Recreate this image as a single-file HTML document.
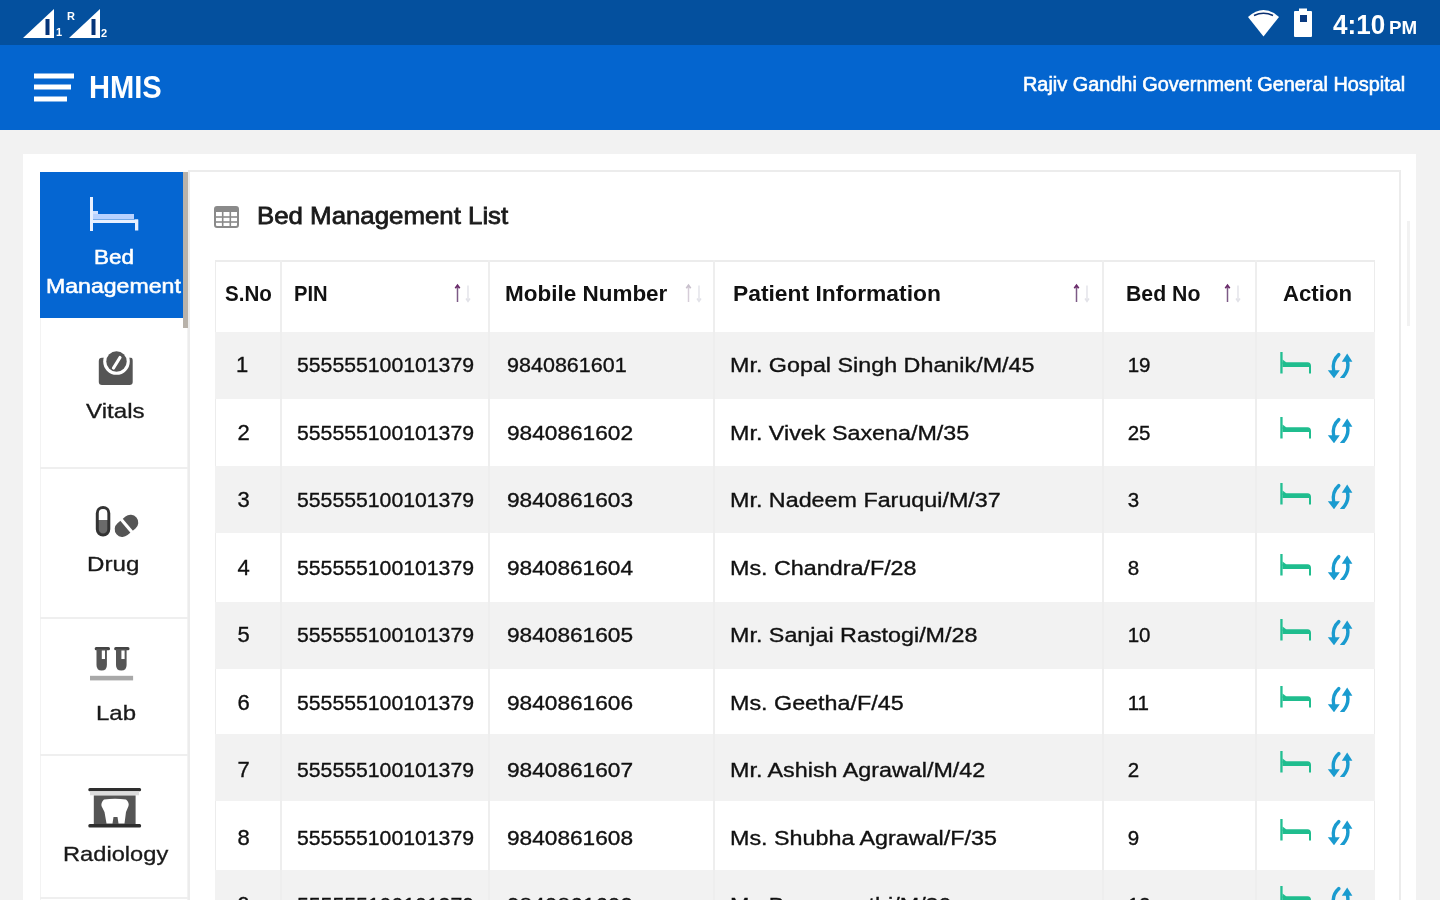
<!DOCTYPE html>
<html><head><meta charset="utf-8"><title>HMIS</title><style>
*{margin:0;padding:0;box-sizing:border-box}
html,body{width:1440px;height:900px;overflow:hidden;background:#f2f2f2;font-family:"Liberation Sans",sans-serif;color:#111}
.a{position:absolute}
.t{position:absolute;white-space:nowrap;line-height:1;transform-origin:0 0}
</style></head>
<body><div id="root" style="position:absolute;left:0;top:0;width:1440px;height:900px;overflow:hidden;filter:blur(0.45px)">
<div class="a" style="left:0;top:0;width:1440px;height:45px;background:#04509e"></div>
<div class="a" style="left:0;top:45px;width:1440px;height:84.5px;background:#0465cf"></div>
<svg class="a" style="left:0;top:0" width="1440" height="45" viewBox="0 0 1440 45">
<polygon points="23,38 54,9 54,38" fill="#fff"/>
<rect x="45.5" y="19" width="4" height="16" fill="#06357a"/>
<text x="56" y="36" font-family="Liberation Sans" font-weight="bold" font-size="11" fill="#fff">1</text>
<text x="67" y="19.5" font-family="Liberation Sans" font-weight="bold" font-size="11" fill="#fff">R</text>
<polygon points="69,38 100,9 100,38" fill="#fff"/>
<rect x="91.5" y="19" width="4" height="16" fill="#06357a"/>
<text x="101" y="37" font-family="Liberation Sans" font-weight="bold" font-size="11" fill="#fff">2</text>
<path d="M1248,17 Q1263.5,3 1279,17 L1263.5,36.5 Z" fill="#fff"/>
<path d="M1254,15.5 Q1263.5,11 1273,15.5" stroke="#0a2f70" stroke-width="1.6" fill="none"/>
<rect x="1299" y="8.5" width="8" height="3" fill="#fff"/>
<rect x="1294" y="11" width="18" height="26" rx="1" fill="#fff"/>
<rect x="1300" y="15" width="7" height="7" fill="#0a3a80"/>
</svg>
<div class="t" style="left:1332.64px;top:10.00px;font-size:28.5px;font-weight:bold;color:#fff;transform:scaleX(0.9140);">4:10</div>
<div class="t" style="left:1388.76px;top:18.00px;font-size:19.0px;font-weight:bold;color:#fff;transform:scaleX(0.9885);">PM</div>
<svg class="a" style="left:0;top:45px" width="200" height="84" viewBox="0 45 200 84">
<rect x="34" y="73.5" width="40" height="5" fill="#fff"/>
<rect x="34" y="84.5" width="37" height="5" fill="#fff"/>
<rect x="34" y="96.5" width="33" height="5" fill="#fff"/>
</svg>
<div class="t" style="left:88.72px;top:72.05px;font-size:31.0px;font-weight:bold;color:#fff;transform:scaleX(0.9387);">HMIS</div>
<div class="t" style="left:1022.78px;top:75.40px;font-size:19.6px;font-weight:normal;color:#fff;transform:scaleX(1.0144);-webkit-text-stroke:0.6px #fff;">Rajiv Gandhi Government General Hospital</div>
<div class="a" style="left:23px;top:154px;width:1393px;height:760px;background:#fff"></div>
<div class="a" style="left:188px;top:170px;width:1213px;height:760px;border:2px solid #ececec;background:#fff"></div>
<div class="a" style="left:40px;top:172px;width:148px;height:728px;background:#fff;border-left:1px solid #f3f3f3;border-right:1px solid #f3f3f3"></div>
<div class="a" style="left:40px;top:172px;width:143px;height:146px;background:#0566d2"></div>
<div class="a" style="left:183px;top:172px;width:5px;height:156px;background:#b8b2aa"></div>
<div class="a" style="left:40px;top:467px;width:148px;height:2px;background:#efefef"></div>
<div class="a" style="left:40px;top:617px;width:148px;height:2px;background:#efefef"></div>
<div class="a" style="left:40px;top:754px;width:148px;height:2px;background:#efefef"></div>
<div class="a" style="left:40px;top:897px;width:148px;height:2px;background:#efefef"></div>
<svg class="a" style="left:0;top:0" width="200" height="900" viewBox="0 0 200 900">
<rect x="90" y="197" width="3" height="34" fill="#e8f0ff"/>
<rect x="93" y="211" width="5" height="5" fill="#cfe0ff"/>
<rect x="93" y="214" width="41" height="5" fill="#b8d2ff"/>
<rect x="93" y="219.5" width="45" height="3.5" fill="#e8f0ff"/>
<rect x="135" y="219.5" width="3.3" height="11" fill="#e8f0ff"/>
</svg>
<div class="t" style="left:94.05px;top:246.70px;font-size:20.2px;font-weight:normal;color:#fff;transform:scaleX(1.1115);-webkit-text-stroke:0.55px #fff;">Bed</div>
<div class="t" style="left:46.10px;top:276.30px;font-size:20.2px;font-weight:normal;color:#fff;transform:scaleX(1.1440);-webkit-text-stroke:0.55px #fff;">Management</div>
<div class="t" style="left:86.00px;top:401.40px;font-size:20.2px;font-weight:normal;color:#1a1a1a;transform:scaleX(1.1958);-webkit-text-stroke:0.3px #1a1a1a;">Vitals</div>
<div class="t" style="left:87.21px;top:553.60px;font-size:20.2px;font-weight:normal;color:#1a1a1a;transform:scaleX(1.1951);-webkit-text-stroke:0.3px #1a1a1a;">Drug</div>
<div class="t" style="left:96.42px;top:703.20px;font-size:20.2px;font-weight:normal;color:#1a1a1a;transform:scaleX(1.1871);-webkit-text-stroke:0.3px #1a1a1a;">Lab</div>
<div class="t" style="left:62.75px;top:844.10px;font-size:20.2px;font-weight:normal;color:#1a1a1a;transform:scaleX(1.1727);-webkit-text-stroke:0.3px #1a1a1a;">Radiology</div>
<svg class="a" style="left:214px;top:206px" width="26" height="22" viewBox="0 0 26 22">
<rect x="1" y="1" width="23" height="20" rx="2" fill="none" stroke="#8a8a8a" stroke-width="2"/>
<rect x="1" y="1" width="23" height="5" fill="#8a8a8a"/>
<line x1="1" y1="11" x2="24" y2="11" stroke="#8a8a8a" stroke-width="1.6"/>
<line x1="1" y1="16" x2="24" y2="16" stroke="#8a8a8a" stroke-width="1.6"/>
<line x1="8.7" y1="5" x2="8.7" y2="21" stroke="#8a8a8a" stroke-width="1.6"/>
<line x1="16.3" y1="5" x2="16.3" y2="21" stroke="#8a8a8a" stroke-width="1.6"/>
</svg>
<div class="t" style="left:257.39px;top:203.65px;font-size:24.5px;font-weight:normal;color:#1a1a1a;transform:scaleX(1.0540);-webkit-text-stroke:0.8px #1a1a1a;">Bed Management List</div>
<div class="a" style="left:215px;top:260px;width:1159.5px;height:640px;background:#fff;border-left:1px solid #ececec;border-right:1px solid #ececec;border-top:2px solid #ececec"></div>
<div class="a" style="left:215px;top:332.3px;width:1159.5px;height:67.20px;background:#f2f2f2"></div>
<div class="a" style="left:215px;top:465.8px;width:1159.5px;height:67.00px;background:#f2f2f2"></div>
<div class="a" style="left:215px;top:602.1px;width:1159.5px;height:67.40px;background:#f2f2f2"></div>
<div class="a" style="left:215px;top:734.4px;width:1159.5px;height:67.10px;background:#f2f2f2"></div>
<div class="a" style="left:215px;top:870px;width:1159.5px;height:67.00px;background:#f2f2f2"></div>
<div class="a" style="left:280px;top:260px;width:2px;height:640px;background:#eeeeee"></div>
<div class="a" style="left:487.5px;top:260px;width:2px;height:640px;background:#eeeeee"></div>
<div class="a" style="left:712.5px;top:260px;width:2px;height:640px;background:#eeeeee"></div>
<div class="a" style="left:1101.5px;top:260px;width:2px;height:640px;background:#eeeeee"></div>
<div class="a" style="left:1254.5px;top:260px;width:2px;height:640px;background:#eeeeee"></div>
<div class="t" style="left:224.58px;top:283.75px;font-size:21.5px;font-weight:bold;color:#111;transform:scaleX(0.9566);">S.No</div>
<div class="t" style="left:294.29px;top:283.75px;font-size:21.5px;font-weight:bold;color:#111;transform:scaleX(0.9394);">PIN</div>
<div class="t" style="left:505.43px;top:283.75px;font-size:21.5px;font-weight:bold;color:#111;transform:scaleX(1.0456);">Mobile Number</div>
<div class="t" style="left:733.11px;top:283.75px;font-size:21.5px;font-weight:bold;color:#111;transform:scaleX(1.0611);">Patient Information</div>
<div class="t" style="left:1126.02px;top:283.75px;font-size:21.5px;font-weight:bold;color:#111;transform:scaleX(0.9890);">Bed No</div>
<div class="t" style="left:1283.18px;top:283.75px;font-size:21.5px;font-weight:bold;color:#111;transform:scaleX(1.0323);">Action</div>
<svg class="a" style="left:453px;top:283px" width="20" height="20" viewBox="0 0 20 20">
<path d="M4.5,19 V3" stroke="#7c5a86" stroke-width="1.5" fill="none"/>
<path d="M2.3,5.2 L4.5,2.2 L6.7,5.2" stroke="#6a2a6a" stroke-width="1.7" fill="none"/>
<path d="M15,2.5 V18" stroke="#e2e2e8" stroke-width="1.4" fill="none"/>
<path d="M13,15.5 L15,18.5 L17,15.5" stroke="#e2e2e8" stroke-width="1.4" fill="none"/>
</svg>
<svg class="a" style="left:684px;top:283px" width="20" height="20" viewBox="0 0 20 20">
<path d="M4.5,19 V3" stroke="#d6cdd8" stroke-width="1.5" fill="none"/>
<path d="M2.3,5.2 L4.5,2.2 L6.7,5.2" stroke="#c8c0cc" stroke-width="1.7" fill="none"/>
<path d="M15,2.5 V18" stroke="#e2e2e8" stroke-width="1.4" fill="none"/>
<path d="M13,15.5 L15,18.5 L17,15.5" stroke="#e2e2e8" stroke-width="1.4" fill="none"/>
</svg>
<svg class="a" style="left:1072px;top:283px" width="20" height="20" viewBox="0 0 20 20">
<path d="M4.5,19 V3" stroke="#7c5a86" stroke-width="1.5" fill="none"/>
<path d="M2.3,5.2 L4.5,2.2 L6.7,5.2" stroke="#6a2a6a" stroke-width="1.7" fill="none"/>
<path d="M15,2.5 V18" stroke="#e2e2e8" stroke-width="1.4" fill="none"/>
<path d="M13,15.5 L15,18.5 L17,15.5" stroke="#e2e2e8" stroke-width="1.4" fill="none"/>
</svg>
<svg class="a" style="left:1223px;top:283px" width="20" height="20" viewBox="0 0 20 20">
<path d="M4.5,19 V3" stroke="#7c5a86" stroke-width="1.5" fill="none"/>
<path d="M2.3,5.2 L4.5,2.2 L6.7,5.2" stroke="#6a2a6a" stroke-width="1.7" fill="none"/>
<path d="M15,2.5 V18" stroke="#e2e2e8" stroke-width="1.4" fill="none"/>
<path d="M13,15.5 L15,18.5 L17,15.5" stroke="#e2e2e8" stroke-width="1.4" fill="none"/>
</svg>
<div class="t" style="left:236.00px;top:353.70px;font-size:20.5px;font-weight:normal;color:#111;font-size:22px;-webkit-text-stroke:0.35px #111;">1</div>
<div class="t" style="left:296.77px;top:355.00px;font-size:20.5px;font-weight:normal;color:#111;transform:scaleX(1.0349);-webkit-text-stroke:0.35px #111;">555555100101379</div>
<div class="t" style="left:507.45px;top:355.00px;font-size:20.5px;font-weight:normal;color:#111;transform:scaleX(1.0500);-webkit-text-stroke:0.35px #111;">9840861601</div>
<div class="t" style="left:729.60px;top:355.00px;font-size:20.5px;font-weight:normal;color:#111;transform:scaleX(1.1370);-webkit-text-stroke:0.35px #111;">Mr. Gopal Singh Dhanik/M/45</div>
<div class="t" style="left:1127.70px;top:355.00px;font-size:20.5px;font-weight:normal;color:#111;-webkit-text-stroke:0.35px #111;">19</div>
<svg class="a" style="left:1278px;top:352.00px" width="80" height="26" viewBox="0 0 80 26">
<rect x="2.3" y="0" width="2.3" height="21.5" fill="#22bf92"/>
<path d="M4.5,7.5 L8.5,10.5 L4.5,12 Z" fill="#22bf92"/>
<path d="M4.5,10.3 L29.5,10.3 Q33,10.5 33,14 L33,21.5 L31,21.5 L31,15 L4.5,15 Z" fill="#1fbd8e"/>
<path d="M60.8,2.6 Q53.5,9 55.8,19.5" stroke="#1a9bcf" stroke-width="3.4" fill="none" stroke-linecap="round"/>
<path d="M49.8,18.3 L56,26.3 L61.8,18.3 Z" fill="#1a9bcf"/>
<path d="M69.2,8.5 Q72,18 63.8,26.3" stroke="#1a9bcf" stroke-width="3.4" fill="none" stroke-linecap="round"/>
<path d="M63.8,9.8 L69.2,1.4 L74.4,9.8 Z" fill="#1a9bcf"/>
</svg>
<div class="t" style="left:237.60px;top:421.60px;font-size:20.5px;font-weight:normal;color:#111;font-size:22px;-webkit-text-stroke:0.35px #111;">2</div>
<div class="t" style="left:296.77px;top:422.90px;font-size:20.5px;font-weight:normal;color:#111;transform:scaleX(1.0349);-webkit-text-stroke:0.35px #111;">555555100101379</div>
<div class="t" style="left:507.45px;top:422.90px;font-size:20.5px;font-weight:normal;color:#111;transform:scaleX(1.1050);-webkit-text-stroke:0.35px #111;">9840861602</div>
<div class="t" style="left:729.60px;top:422.90px;font-size:20.5px;font-weight:normal;color:#111;transform:scaleX(1.1370);-webkit-text-stroke:0.35px #111;">Mr. Vivek Saxena/M/35</div>
<div class="t" style="left:1127.70px;top:422.90px;font-size:20.5px;font-weight:normal;color:#111;-webkit-text-stroke:0.35px #111;">25</div>
<svg class="a" style="left:1278px;top:417.30px" width="80" height="26" viewBox="0 0 80 26">
<rect x="2.3" y="0" width="2.3" height="21.5" fill="#22bf92"/>
<path d="M4.5,7.5 L8.5,10.5 L4.5,12 Z" fill="#22bf92"/>
<path d="M4.5,10.3 L29.5,10.3 Q33,10.5 33,14 L33,21.5 L31,21.5 L31,15 L4.5,15 Z" fill="#1fbd8e"/>
<path d="M60.8,2.6 Q53.5,9 55.8,19.5" stroke="#1a9bcf" stroke-width="3.4" fill="none" stroke-linecap="round"/>
<path d="M49.8,18.3 L56,26.3 L61.8,18.3 Z" fill="#1a9bcf"/>
<path d="M69.2,8.5 Q72,18 63.8,26.3" stroke="#1a9bcf" stroke-width="3.4" fill="none" stroke-linecap="round"/>
<path d="M63.8,9.8 L69.2,1.4 L74.4,9.8 Z" fill="#1a9bcf"/>
</svg>
<div class="t" style="left:237.60px;top:488.70px;font-size:20.5px;font-weight:normal;color:#111;font-size:22px;-webkit-text-stroke:0.35px #111;">3</div>
<div class="t" style="left:296.77px;top:490.00px;font-size:20.5px;font-weight:normal;color:#111;transform:scaleX(1.0349);-webkit-text-stroke:0.35px #111;">555555100101379</div>
<div class="t" style="left:507.45px;top:490.00px;font-size:20.5px;font-weight:normal;color:#111;transform:scaleX(1.1050);-webkit-text-stroke:0.35px #111;">9840861603</div>
<div class="t" style="left:729.60px;top:490.00px;font-size:20.5px;font-weight:normal;color:#111;transform:scaleX(1.1370);-webkit-text-stroke:0.35px #111;">Mr. Nadeem Faruqui/M/37</div>
<div class="t" style="left:1127.70px;top:490.00px;font-size:20.5px;font-weight:normal;color:#111;-webkit-text-stroke:0.35px #111;">3</div>
<svg class="a" style="left:1278px;top:482.50px" width="80" height="26" viewBox="0 0 80 26">
<rect x="2.3" y="0" width="2.3" height="21.5" fill="#22bf92"/>
<path d="M4.5,7.5 L8.5,10.5 L4.5,12 Z" fill="#22bf92"/>
<path d="M4.5,10.3 L29.5,10.3 Q33,10.5 33,14 L33,21.5 L31,21.5 L31,15 L4.5,15 Z" fill="#1fbd8e"/>
<path d="M60.8,2.6 Q53.5,9 55.8,19.5" stroke="#1a9bcf" stroke-width="3.4" fill="none" stroke-linecap="round"/>
<path d="M49.8,18.3 L56,26.3 L61.8,18.3 Z" fill="#1a9bcf"/>
<path d="M69.2,8.5 Q72,18 63.8,26.3" stroke="#1a9bcf" stroke-width="3.4" fill="none" stroke-linecap="round"/>
<path d="M63.8,9.8 L69.2,1.4 L74.4,9.8 Z" fill="#1a9bcf"/>
</svg>
<div class="t" style="left:237.60px;top:556.60px;font-size:20.5px;font-weight:normal;color:#111;font-size:22px;-webkit-text-stroke:0.35px #111;">4</div>
<div class="t" style="left:296.77px;top:557.90px;font-size:20.5px;font-weight:normal;color:#111;transform:scaleX(1.0349);-webkit-text-stroke:0.35px #111;">555555100101379</div>
<div class="t" style="left:507.45px;top:557.90px;font-size:20.5px;font-weight:normal;color:#111;transform:scaleX(1.1050);-webkit-text-stroke:0.35px #111;">9840861604</div>
<div class="t" style="left:729.60px;top:557.90px;font-size:20.5px;font-weight:normal;color:#111;transform:scaleX(1.1370);-webkit-text-stroke:0.35px #111;">Ms. Chandra/F/28</div>
<div class="t" style="left:1127.70px;top:557.90px;font-size:20.5px;font-weight:normal;color:#111;-webkit-text-stroke:0.35px #111;">8</div>
<svg class="a" style="left:1278px;top:553.50px" width="80" height="26" viewBox="0 0 80 26">
<rect x="2.3" y="0" width="2.3" height="21.5" fill="#22bf92"/>
<path d="M4.5,7.5 L8.5,10.5 L4.5,12 Z" fill="#22bf92"/>
<path d="M4.5,10.3 L29.5,10.3 Q33,10.5 33,14 L33,21.5 L31,21.5 L31,15 L4.5,15 Z" fill="#1fbd8e"/>
<path d="M60.8,2.6 Q53.5,9 55.8,19.5" stroke="#1a9bcf" stroke-width="3.4" fill="none" stroke-linecap="round"/>
<path d="M49.8,18.3 L56,26.3 L61.8,18.3 Z" fill="#1a9bcf"/>
<path d="M69.2,8.5 Q72,18 63.8,26.3" stroke="#1a9bcf" stroke-width="3.4" fill="none" stroke-linecap="round"/>
<path d="M63.8,9.8 L69.2,1.4 L74.4,9.8 Z" fill="#1a9bcf"/>
</svg>
<div class="t" style="left:237.60px;top:623.70px;font-size:20.5px;font-weight:normal;color:#111;font-size:22px;-webkit-text-stroke:0.35px #111;">5</div>
<div class="t" style="left:296.77px;top:625.00px;font-size:20.5px;font-weight:normal;color:#111;transform:scaleX(1.0349);-webkit-text-stroke:0.35px #111;">555555100101379</div>
<div class="t" style="left:507.45px;top:625.00px;font-size:20.5px;font-weight:normal;color:#111;transform:scaleX(1.1050);-webkit-text-stroke:0.35px #111;">9840861605</div>
<div class="t" style="left:729.60px;top:625.00px;font-size:20.5px;font-weight:normal;color:#111;transform:scaleX(1.1370);-webkit-text-stroke:0.35px #111;">Mr. Sanjai Rastogi/M/28</div>
<div class="t" style="left:1127.70px;top:625.00px;font-size:20.5px;font-weight:normal;color:#111;-webkit-text-stroke:0.35px #111;">10</div>
<svg class="a" style="left:1278px;top:619.00px" width="80" height="26" viewBox="0 0 80 26">
<rect x="2.3" y="0" width="2.3" height="21.5" fill="#22bf92"/>
<path d="M4.5,7.5 L8.5,10.5 L4.5,12 Z" fill="#22bf92"/>
<path d="M4.5,10.3 L29.5,10.3 Q33,10.5 33,14 L33,21.5 L31,21.5 L31,15 L4.5,15 Z" fill="#1fbd8e"/>
<path d="M60.8,2.6 Q53.5,9 55.8,19.5" stroke="#1a9bcf" stroke-width="3.4" fill="none" stroke-linecap="round"/>
<path d="M49.8,18.3 L56,26.3 L61.8,18.3 Z" fill="#1a9bcf"/>
<path d="M69.2,8.5 Q72,18 63.8,26.3" stroke="#1a9bcf" stroke-width="3.4" fill="none" stroke-linecap="round"/>
<path d="M63.8,9.8 L69.2,1.4 L74.4,9.8 Z" fill="#1a9bcf"/>
</svg>
<div class="t" style="left:237.60px;top:691.60px;font-size:20.5px;font-weight:normal;color:#111;font-size:22px;-webkit-text-stroke:0.35px #111;">6</div>
<div class="t" style="left:296.77px;top:692.90px;font-size:20.5px;font-weight:normal;color:#111;transform:scaleX(1.0349);-webkit-text-stroke:0.35px #111;">555555100101379</div>
<div class="t" style="left:507.45px;top:692.90px;font-size:20.5px;font-weight:normal;color:#111;transform:scaleX(1.1050);-webkit-text-stroke:0.35px #111;">9840861606</div>
<div class="t" style="left:729.60px;top:692.90px;font-size:20.5px;font-weight:normal;color:#111;transform:scaleX(1.1370);-webkit-text-stroke:0.35px #111;">Ms. Geetha/F/45</div>
<div class="t" style="left:1127.70px;top:692.90px;font-size:20.5px;font-weight:normal;color:#111;-webkit-text-stroke:0.35px #111;">11</div>
<svg class="a" style="left:1278px;top:686.30px" width="80" height="26" viewBox="0 0 80 26">
<rect x="2.3" y="0" width="2.3" height="21.5" fill="#22bf92"/>
<path d="M4.5,7.5 L8.5,10.5 L4.5,12 Z" fill="#22bf92"/>
<path d="M4.5,10.3 L29.5,10.3 Q33,10.5 33,14 L33,21.5 L31,21.5 L31,15 L4.5,15 Z" fill="#1fbd8e"/>
<path d="M60.8,2.6 Q53.5,9 55.8,19.5" stroke="#1a9bcf" stroke-width="3.4" fill="none" stroke-linecap="round"/>
<path d="M49.8,18.3 L56,26.3 L61.8,18.3 Z" fill="#1a9bcf"/>
<path d="M69.2,8.5 Q72,18 63.8,26.3" stroke="#1a9bcf" stroke-width="3.4" fill="none" stroke-linecap="round"/>
<path d="M63.8,9.8 L69.2,1.4 L74.4,9.8 Z" fill="#1a9bcf"/>
</svg>
<div class="t" style="left:237.60px;top:758.70px;font-size:20.5px;font-weight:normal;color:#111;font-size:22px;-webkit-text-stroke:0.35px #111;">7</div>
<div class="t" style="left:296.77px;top:760.00px;font-size:20.5px;font-weight:normal;color:#111;transform:scaleX(1.0349);-webkit-text-stroke:0.35px #111;">555555100101379</div>
<div class="t" style="left:507.45px;top:760.00px;font-size:20.5px;font-weight:normal;color:#111;transform:scaleX(1.1050);-webkit-text-stroke:0.35px #111;">9840861607</div>
<div class="t" style="left:729.60px;top:760.00px;font-size:20.5px;font-weight:normal;color:#111;transform:scaleX(1.1370);-webkit-text-stroke:0.35px #111;">Mr. Ashish Agrawal/M/42</div>
<div class="t" style="left:1127.70px;top:760.00px;font-size:20.5px;font-weight:normal;color:#111;-webkit-text-stroke:0.35px #111;">2</div>
<svg class="a" style="left:1278px;top:751.30px" width="80" height="26" viewBox="0 0 80 26">
<rect x="2.3" y="0" width="2.3" height="21.5" fill="#22bf92"/>
<path d="M4.5,7.5 L8.5,10.5 L4.5,12 Z" fill="#22bf92"/>
<path d="M4.5,10.3 L29.5,10.3 Q33,10.5 33,14 L33,21.5 L31,21.5 L31,15 L4.5,15 Z" fill="#1fbd8e"/>
<path d="M60.8,2.6 Q53.5,9 55.8,19.5" stroke="#1a9bcf" stroke-width="3.4" fill="none" stroke-linecap="round"/>
<path d="M49.8,18.3 L56,26.3 L61.8,18.3 Z" fill="#1a9bcf"/>
<path d="M69.2,8.5 Q72,18 63.8,26.3" stroke="#1a9bcf" stroke-width="3.4" fill="none" stroke-linecap="round"/>
<path d="M63.8,9.8 L69.2,1.4 L74.4,9.8 Z" fill="#1a9bcf"/>
</svg>
<div class="t" style="left:237.60px;top:826.60px;font-size:20.5px;font-weight:normal;color:#111;font-size:22px;-webkit-text-stroke:0.35px #111;">8</div>
<div class="t" style="left:296.77px;top:827.90px;font-size:20.5px;font-weight:normal;color:#111;transform:scaleX(1.0349);-webkit-text-stroke:0.35px #111;">555555100101379</div>
<div class="t" style="left:507.45px;top:827.90px;font-size:20.5px;font-weight:normal;color:#111;transform:scaleX(1.1050);-webkit-text-stroke:0.35px #111;">9840861608</div>
<div class="t" style="left:729.60px;top:827.90px;font-size:20.5px;font-weight:normal;color:#111;transform:scaleX(1.1370);-webkit-text-stroke:0.35px #111;">Ms. Shubha Agrawal/F/35</div>
<div class="t" style="left:1127.70px;top:827.90px;font-size:20.5px;font-weight:normal;color:#111;-webkit-text-stroke:0.35px #111;">9</div>
<svg class="a" style="left:1278px;top:819.30px" width="80" height="26" viewBox="0 0 80 26">
<rect x="2.3" y="0" width="2.3" height="21.5" fill="#22bf92"/>
<path d="M4.5,7.5 L8.5,10.5 L4.5,12 Z" fill="#22bf92"/>
<path d="M4.5,10.3 L29.5,10.3 Q33,10.5 33,14 L33,21.5 L31,21.5 L31,15 L4.5,15 Z" fill="#1fbd8e"/>
<path d="M60.8,2.6 Q53.5,9 55.8,19.5" stroke="#1a9bcf" stroke-width="3.4" fill="none" stroke-linecap="round"/>
<path d="M49.8,18.3 L56,26.3 L61.8,18.3 Z" fill="#1a9bcf"/>
<path d="M69.2,8.5 Q72,18 63.8,26.3" stroke="#1a9bcf" stroke-width="3.4" fill="none" stroke-linecap="round"/>
<path d="M63.8,9.8 L69.2,1.4 L74.4,9.8 Z" fill="#1a9bcf"/>
</svg>
<div class="t" style="left:237.60px;top:893.70px;font-size:20.5px;font-weight:normal;color:#111;font-size:22px;-webkit-text-stroke:0.35px #111;">9</div>
<div class="t" style="left:296.77px;top:895.00px;font-size:20.5px;font-weight:normal;color:#111;transform:scaleX(1.0349);-webkit-text-stroke:0.35px #111;">555555100101379</div>
<div class="t" style="left:507.45px;top:895.00px;font-size:20.5px;font-weight:normal;color:#111;transform:scaleX(1.1050);-webkit-text-stroke:0.35px #111;">9840861609</div>
<div class="t" style="left:729.60px;top:895.00px;font-size:20.5px;font-weight:normal;color:#111;transform:scaleX(1.1370);-webkit-text-stroke:0.35px #111;">Mr. Bannumathi/M/30</div>
<div class="t" style="left:1127.70px;top:895.00px;font-size:20.5px;font-weight:normal;color:#111;-webkit-text-stroke:0.35px #111;">12</div>
<svg class="a" style="left:1278px;top:886.30px" width="80" height="26" viewBox="0 0 80 26">
<rect x="2.3" y="0" width="2.3" height="21.5" fill="#22bf92"/>
<path d="M4.5,7.5 L8.5,10.5 L4.5,12 Z" fill="#22bf92"/>
<path d="M4.5,10.3 L29.5,10.3 Q33,10.5 33,14 L33,21.5 L31,21.5 L31,15 L4.5,15 Z" fill="#1fbd8e"/>
<path d="M60.8,2.6 Q53.5,9 55.8,19.5" stroke="#1a9bcf" stroke-width="3.4" fill="none" stroke-linecap="round"/>
<path d="M49.8,18.3 L56,26.3 L61.8,18.3 Z" fill="#1a9bcf"/>
<path d="M69.2,8.5 Q72,18 63.8,26.3" stroke="#1a9bcf" stroke-width="3.4" fill="none" stroke-linecap="round"/>
<path d="M63.8,9.8 L69.2,1.4 L74.4,9.8 Z" fill="#1a9bcf"/>
</svg>
<svg class="a" style="left:0;top:300px" width="200" height="600" viewBox="0 300 200 600">
<path d="M98.8,361 Q98.8,357.7 102,357.7 L131,357.7 Q132.7,357.7 132.7,361 L132.7,382 Q132.7,385 129.5,385 L102,385 Q98.8,385 98.8,382 Z" fill="#555"/>
<circle cx="116.5" cy="361.5" r="13.3" fill="#fff"/>
<circle cx="116.5" cy="361.5" r="10.2" fill="#555"/>
<path d="M113.5,368 L120,357.5" stroke="#fff" stroke-width="3.2" stroke-linecap="round"/>
<rect x="97.3" y="507.5" width="11.5" height="27.5" rx="5.75" fill="#6a6a6a" stroke="#333" stroke-width="3"/>
<path d="M98.8,520 L98.8,513 Q98.8,509 103,509 Q107.3,509 107.3,513 L107.3,520 Z" fill="#fff"/>
<g transform="rotate(-40 126.5 525.8)">
<rect x="113.5" y="518" width="26" height="15.6" rx="7.8" fill="#555"/>
<rect x="125" y="514" width="3.2" height="24" fill="#fff"/>
</g>
<rect x="94.7" y="647" width="15.3" height="3.3" rx="1.5" fill="#444"/>
<path d="M96.5,649 L106.9,649 L106.9,665 Q106.9,670.5 101.7,670.5 Q96.5,670.5 96.5,665 Z" fill="#555"/>
<rect x="101.8" y="650.5" width="3.2" height="8.5" fill="#fff"/>
<rect x="114.2" y="647" width="15.3" height="3.3" rx="1.5" fill="#444"/>
<path d="M116,649 L126.6,649 L126.6,665 Q126.6,670.5 121.3,670.5 Q116,670.5 116,665 Z" fill="#555"/>
<rect x="121.4" y="650.5" width="3.2" height="8.5" fill="#fff"/>
<rect x="90" y="675.8" width="43.1" height="4.6" fill="#a8a8a8"/>
<rect x="88.3" y="788" width="52.8" height="3.3" rx="1.5" fill="#2e2e2e"/>
<rect x="90" y="791.3" width="49" height="4" fill="#dcdcdc"/>
<rect x="93.8" y="795.5" width="41.8" height="30" fill="#555"/>
<path d="M104,799.5 Q115,798 126,799.5 Q129.5,802.5 128.5,806 L126,812 L124.5,823.5 L118.5,823.5 L117.5,817 L113.5,817 L112.5,823.5 L106.5,823.5 L104.5,812 L101.5,806 Q100.8,802.5 104,799.5 Z" fill="#fff"/>
<rect x="88.3" y="824" width="52.8" height="3.5" rx="1.5" fill="#2e2e2e"/>
</svg>
<div class="a" style="left:1407px;top:221px;width:3px;height:105px;background:#f2f2f2"></div>
</div></body></html>
